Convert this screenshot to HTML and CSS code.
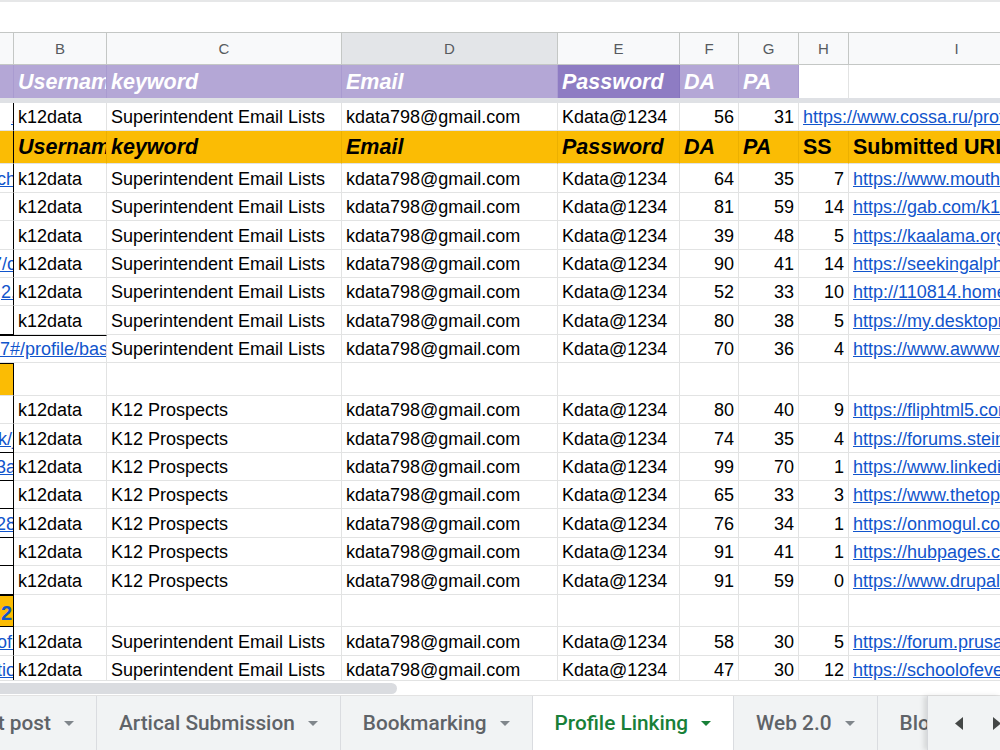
FILE: index.html
```html
<!DOCTYPE html>
<html lang="en">

<head>
    <meta charset="UTF-8">
    <meta name="viewport" content="width=device-width, initial-scale=1.0">
    <title>Profile Linking</title>
    <link rel="stylesheet" href="styles.css">
</head>

<body>
    <div class="sheet">
        <div class="toolbar"></div>

        <div class="grid">
            <!-- column letters -->
            <div class="row col-head">
                <div class="cell"></div>
                <div class="cell">B</div>
                <div class="cell">C</div>
                <div class="cell selected">D</div>
                <div class="cell">E</div>
                <div class="cell">F</div>
                <div class="cell">G</div>
                <div class="cell">H</div>
                <div class="cell">I</div>
            </div>

            <!-- frozen header -->
            <div class="row head purple">
                <div class="cell"></div>
                <div class="cell">Username</div>
                <div class="cell">keyword</div>
                <div class="cell">Email</div>
                <div class="cell dark">Password</div>
                <div class="cell">DA</div>
                <div class="cell">PA</div>
                <div class="cell blank"></div>
                <div class="cell blank"></div>
            </div>
            <div class="frozen"></div>

            <div class="row">
                <div class="cell col-a"><a href="#">.</a></div>
                <div class="cell">k12data</div>
                <div class="cell">Superintendent Email Lists</div>
                <div class="cell">kdata798@gmail.com</div>
                <div class="cell">Kdata@1234</div>
                <div class="cell num">56</div>
                <div class="cell num">31</div>
                <div class="cell wide"><a href="#">https://www.cossa.ru/profile/?ID=k12data</a></div>
            </div>

            <div class="row head orange">
                <div class="cell col-a"></div>
                <div class="cell">Username</div>
                <div class="cell">keyword</div>
                <div class="cell">Email</div>
                <div class="cell">Password</div>
                <div class="cell">DA</div>
                <div class="cell">PA</div>
                <div class="cell upright">SS</div>
                <div class="cell upright">Submitted URL</div>
            </div>

            <!-- Superintendent Email Lists -->
            <div class="row">
                <div class="cell col-a"><a href="#">ch</a></div>
                <div class="cell">k12data</div>
                <div class="cell">Superintendent Email Lists</div>
                <div class="cell">kdata798@gmail.com</div>
                <div class="cell">Kdata@1234</div>
                <div class="cell num">64</div>
                <div class="cell num">35</div>
                <div class="cell num">7</div>
                <div class="cell"><a href="#">https://www.mouthshut.com/k12data</a></div>
            </div>
            <div class="row">
                <div class="cell col-a"></div>
                <div class="cell">k12data</div>
                <div class="cell">Superintendent Email Lists</div>
                <div class="cell">kdata798@gmail.com</div>
                <div class="cell">Kdata@1234</div>
                <div class="cell num">81</div>
                <div class="cell num">59</div>
                <div class="cell num">14</div>
                <div class="cell"><a href="#">https://gab.com/k12data</a></div>
            </div>
            <div class="row">
                <div class="cell col-a"></div>
                <div class="cell">k12data</div>
                <div class="cell">Superintendent Email Lists</div>
                <div class="cell">kdata798@gmail.com</div>
                <div class="cell">Kdata@1234</div>
                <div class="cell num">39</div>
                <div class="cell num">48</div>
                <div class="cell num">5</div>
                <div class="cell"><a href="#">https://kaalama.org/k12data</a></div>
            </div>
            <div class="row">
                <div class="cell col-a"><a href="#">7/c</a></div>
                <div class="cell">k12data</div>
                <div class="cell">Superintendent Email Lists</div>
                <div class="cell">kdata798@gmail.com</div>
                <div class="cell">Kdata@1234</div>
                <div class="cell num">90</div>
                <div class="cell num">41</div>
                <div class="cell num">14</div>
                <div class="cell"><a href="#">https://seekingalpha.com/user/k12data</a></div>
            </div>
            <div class="row">
                <div class="cell col-a"><a href="#">2.</a></div>
                <div class="cell">k12data</div>
                <div class="cell">Superintendent Email Lists</div>
                <div class="cell">kdata798@gmail.com</div>
                <div class="cell">Kdata@1234</div>
                <div class="cell num">52</div>
                <div class="cell num">33</div>
                <div class="cell num">10</div>
                <div class="cell"><a href="#">http://110814.homepagemodules.de/k12data</a></div>
            </div>
            <div class="row">
                <div class="cell col-a boxed"></div>
                <div class="cell">k12data</div>
                <div class="cell">Superintendent Email Lists</div>
                <div class="cell">kdata798@gmail.com</div>
                <div class="cell">Kdata@1234</div>
                <div class="cell num">80</div>
                <div class="cell num">38</div>
                <div class="cell num">5</div>
                <div class="cell"><a href="#">https://my.desktopnexus.com/k12data</a></div>
            </div>
            <div class="row">
                <div class="cell spill"><a href="#">7#/profile/basic</a></div>
                <div class="cell">Superintendent Email Lists</div>
                <div class="cell">kdata798@gmail.com</div>
                <div class="cell">Kdata@1234</div>
                <div class="cell num">70</div>
                <div class="cell num">36</div>
                <div class="cell num">4</div>
                <div class="cell"><a href="#">https://www.awwwards.com/k12data</a></div>
            </div>
            <div class="row gap">
                <div class="cell col-a mark"></div>
                <div class="cell"></div>
                <div class="cell"></div>
                <div class="cell"></div>
                <div class="cell"></div>
                <div class="cell"></div>
                <div class="cell"></div>
                <div class="cell"></div>
                <div class="cell"></div>
            </div>

            <!-- K12 Prospects -->
            <div class="row">
                <div class="cell col-a"></div>
                <div class="cell">k12data</div>
                <div class="cell">K12 Prospects</div>
                <div class="cell">kdata798@gmail.com</div>
                <div class="cell">Kdata@1234</div>
                <div class="cell num">80</div>
                <div class="cell num">40</div>
                <div class="cell num">9</div>
                <div class="cell"><a href="#">https://fliphtml5.com/homepage/k12data</a></div>
            </div>
            <div class="row">
                <div class="cell col-a boxed"><a href="#">k/j</a></div>
                <div class="cell">k12data</div>
                <div class="cell">K12 Prospects</div>
                <div class="cell">kdata798@gmail.com</div>
                <div class="cell">Kdata@1234</div>
                <div class="cell num">74</div>
                <div class="cell num">35</div>
                <div class="cell num">4</div>
                <div class="cell"><a href="#">https://forums.steinberg.net/u/k12data</a></div>
            </div>
            <div class="row">
                <div class="cell col-a boxed"><a href="#">3a</a></div>
                <div class="cell">k12data</div>
                <div class="cell">K12 Prospects</div>
                <div class="cell">kdata798@gmail.com</div>
                <div class="cell">Kdata@1234</div>
                <div class="cell num">99</div>
                <div class="cell num">70</div>
                <div class="cell num">1</div>
                <div class="cell"><a href="#">https://www.linkedin.com/in/k12data</a></div>
            </div>
            <div class="row">
                <div class="cell col-a boxed"></div>
                <div class="cell">k12data</div>
                <div class="cell">K12 Prospects</div>
                <div class="cell">kdata798@gmail.com</div>
                <div class="cell">Kdata@1234</div>
                <div class="cell num">65</div>
                <div class="cell num">33</div>
                <div class="cell num">3</div>
                <div class="cell"><a href="#">https://www.thetoptens.com/m/k12data</a></div>
            </div>
            <div class="row">
                <div class="cell col-a boxed"><a href="#">28</a></div>
                <div class="cell">k12data</div>
                <div class="cell">K12 Prospects</div>
                <div class="cell">kdata798@gmail.com</div>
                <div class="cell">Kdata@1234</div>
                <div class="cell num">76</div>
                <div class="cell num">34</div>
                <div class="cell num">1</div>
                <div class="cell"><a href="#">https://onmogul.com/k12data</a></div>
            </div>
            <div class="row">
                <div class="cell col-a boxed"></div>
                <div class="cell">k12data</div>
                <div class="cell">K12 Prospects</div>
                <div class="cell">kdata798@gmail.com</div>
                <div class="cell">Kdata@1234</div>
                <div class="cell num">91</div>
                <div class="cell num">41</div>
                <div class="cell num">1</div>
                <div class="cell"><a href="#">https://hubpages.com/@k12data</a></div>
            </div>
            <div class="row">
                <div class="cell col-a boxed"></div>
                <div class="cell">k12data</div>
                <div class="cell">K12 Prospects</div>
                <div class="cell">kdata798@gmail.com</div>
                <div class="cell">Kdata@1234</div>
                <div class="cell num">91</div>
                <div class="cell num">59</div>
                <div class="cell num">0</div>
                <div class="cell"><a href="#">https://www.drupal.org/u/k12data</a></div>
            </div>
            <div class="row gap">
                <div class="cell col-a mark boxed"><span class="count">2</span></div>
                <div class="cell"></div>
                <div class="cell"></div>
                <div class="cell"></div>
                <div class="cell"></div>
                <div class="cell"></div>
                <div class="cell"></div>
                <div class="cell"></div>
                <div class="cell"></div>
            </div>

            <!-- Superintendent Email Lists -->
            <div class="row">
                <div class="cell col-a"><a href="#">ofi</a></div>
                <div class="cell">k12data</div>
                <div class="cell">Superintendent Email Lists</div>
                <div class="cell">kdata798@gmail.com</div>
                <div class="cell">Kdata@1234</div>
                <div class="cell num">58</div>
                <div class="cell num">30</div>
                <div class="cell num">5</div>
                <div class="cell"><a href="#">https://forum.prusa3d.com/profile/k12data</a></div>
            </div>
            <div class="row">
                <div class="cell col-a"><a href="#">tio</a></div>
                <div class="cell">k12data</div>
                <div class="cell">Superintendent Email Lists</div>
                <div class="cell">kdata798@gmail.com</div>
                <div class="cell">Kdata@1234</div>
                <div class="cell num">47</div>
                <div class="cell num">30</div>
                <div class="cell num">12</div>
                <div class="cell"><a href="#">https://schoolofeverything.com/user/k12data</a></div>
            </div>
        </div>

        <div class="hscroll">
            <div class="thumb"></div>
        </div>

        <div class="tab-bar">
            <div class="tab-list">
                <div class="tab first">Guest post <svg class="caret" width="10" height="5" viewBox="0 0 10 5"><polygon points="0,0 10,0 5,5"/></svg></div>
                <div class="tab">Artical Submission <svg class="caret" width="10" height="5" viewBox="0 0 10 5"><polygon points="0,0 10,0 5,5"/></svg></div>
                <div class="tab">Bookmarking <svg class="caret" width="10" height="5" viewBox="0 0 10 5"><polygon points="0,0 10,0 5,5"/></svg></div>
                <div class="tab active">Profile Linking <svg class="caret" width="10" height="5" viewBox="0 0 10 5"><polygon points="0,0 10,0 5,5"/></svg></div>
                <div class="tab">Web 2.0 <svg class="caret" width="10" height="5" viewBox="0 0 10 5"><polygon points="0,0 10,0 5,5"/></svg></div>
                <div class="tab">Blog Comment <svg class="caret" width="10" height="5" viewBox="0 0 10 5"><polygon points="0,0 10,0 5,5"/></svg></div>
            </div>
            <div class="tab-nav">
                <svg width="8" height="13" viewBox="0 0 8 13"><polygon points="8,0 8,13 0,6.5"/></svg>
                <svg width="8" height="13" viewBox="0 0 8 13"><polygon points="0,0 0,13 8,6.5"/></svg>
            </div>
        </div>
    </div>
</body>

</html>
```

FILE: styles.css
```css
body {
    margin: 0;
    font-family: "Liberation Sans", Arial, sans-serif;
    background-color: #fff;
    width: 1000px;
    height: 750px;
    overflow: hidden;
}

.sheet {
    display: flex;
    flex-direction: column;
    height: 750px;
}

.toolbar {
    height: 32px;
    flex-shrink: 0;
    border-top: 2px solid #e6e7e8;
    box-sizing: border-box;
}

.grid {
    height: 648px;
    flex-shrink: 0;
    overflow: hidden;
}

.row {
    display: grid;
    grid-template-columns: 14px 93px 235px 216px 122px 59px 60px 50px 216px;
    height: 28.4px;
}

.cell {
    box-sizing: border-box;
    display: flex;
    align-items: flex-end;
    padding: 0 4px 2px 4px;
    border-right: 1px solid #e2e3e3;
    border-bottom: 1px solid #e2e3e3;
    font-size: 18px;
    line-height: 21px;
    color: #000;
    white-space: nowrap;
    overflow: hidden;
}

.cell a {
    color: #1155cc;
    text-decoration: underline;
}

.num {
    justify-content: flex-end;
}

.wide {
    grid-column: span 2;
}

/* column letters */
.col-head {
    height: 33px;
    border-top: 1px solid #c4c7c5;
    box-sizing: border-box;
    background-color: #f8f9fa;
}

.col-head .cell {
    justify-content: center;
    align-items: center;
    padding: 0;
    font-size: 15px;
    color: #575b5f;
    border-right-color: #c4c7c5;
    border-bottom-color: #c4c7c5;
}

.col-head .selected {
    background-color: #e3e5e8;
}

/* header rows */
.head {
    height: 33px;
}

.head .cell {
    font-size: 21.5px;
    line-height: 25px;
    font-weight: bold;
    font-style: italic;
    padding-bottom: 3px;
}

.purple .cell {
    background-color: #b4a7d6;
    color: #fff;
    border-right-color: #a99bd0;
    border-bottom: none;
}

.purple .dark {
    background-color: #8e7cc3;
    border-right-color: #8574bd;
}

.purple .blank {
    background-color: #fff;
    border-right-color: #e2e3e3;
}

.frozen {
    height: 5px;
    background-color: #dfe1e5;
}

.orange .cell {
    background-color: #fbbc04;
    border-right-color: #ecb000;
}

.orange .upright {
    font-style: normal;
}

/* column A, partly scrolled out */
.col-a {
    padding: 0 0 2px 0;
    justify-content: flex-end;
    border-right-color: #000;
}

.col-a a {
    margin-right: -3px;
}

.boxed {
    border-bottom-color: #000;
}

.orange .col-a {
    border-right-color: #000;
}

.spill {
    grid-column: span 2;
    padding: 0 0 2px 0;
    border-top: 1px solid #000;
}

.gap {
    height: 32.8px;
}

.mark {
    background-color: #fbbc04;
    border-top: 1px solid #000;
}

.count {
    color: #1155cc;
    font-weight: bold;
    font-size: 20px;
    margin-right: 1px;
}

/* horizontal scrollbar */
.hscroll {
    height: 15px;
    flex-shrink: 0;
    padding-top: 2px;
    box-sizing: border-box;
    border-top: 1px solid #e2e3e3;
}

.thumb {
    width: 397px;
    height: 11px;
    background-color: #dadce0;
    border-radius: 0 6px 6px 0;
}

/* sheet tabs */
.tab-bar {
    display: flex;
    height: 55px;
    flex-shrink: 0;
    background-color: #f1f3f4;
    border-top: 1px solid #e3e3e3;
    box-sizing: border-box;
}

.tab-list {
    display: flex;
    width: 927px;
    flex-shrink: 0;
    overflow: hidden;
}

.tab {
    display: flex;
    align-items: center;
    gap: 13px;
    flex-shrink: 0;
    padding: 0 22px 0 22px;
    border-right: 1px solid #dadce0;
    font-family: Roboto, "Liberation Sans", sans-serif;
    font-weight: 500;
    font-size: 20.8px;
    color: #5f6368;
    white-space: nowrap;
}

.tab.first {
    width: 97px;
    box-sizing: border-box;
    justify-content: flex-end;
    overflow: hidden;
}

.caret {
    fill: #80868b;
    flex-shrink: 0;
}

.tab.active {
    background-color: #fff;
    color: #188038;
}

.tab.active .caret {
    fill: #188038;
}

.tab-nav {
    display: flex;
    align-items: center;
    gap: 30px;
    padding-left: 27px;
    flex: 1;
    border-left: 1px solid #d5d7db;
    box-shadow: -3px 0 5px rgba(0, 0, 0, 0.12);
}

.tab-nav svg {
    fill: #444746;
    flex-shrink: 0;
}
```
